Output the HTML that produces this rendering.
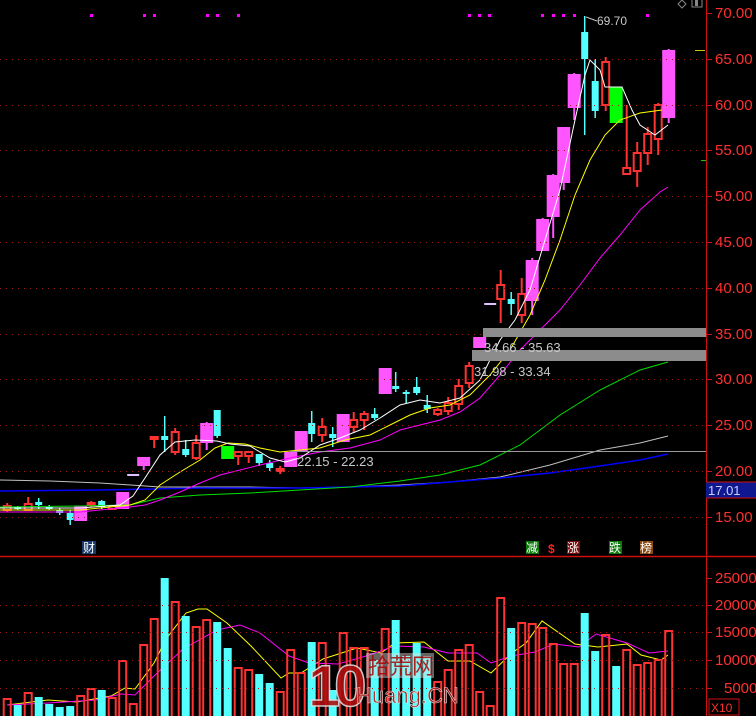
<!DOCTYPE html>
<html><head><meta charset="utf-8"><style>
html,body{margin:0;padding:0;background:#000;width:756px;height:716px;overflow:hidden}
svg{display:block}
text{font-family:"Liberation Sans","Noto Sans CJK SC",sans-serif}
</style></head><body>
<svg id="s" width="756" height="716" viewBox="0 0 756 716" xmlns="http://www.w3.org/2000/svg">
<rect width="756" height="716" fill="#000"/>
<g id="grid" stroke="#a01818" stroke-width="1" stroke-dasharray="1,5"></g>
<g id="ma"></g>
<g id="cd"></g>
<g id="vol"></g>
<g id="vma"></g>
<rect x="483" y="328" width="223" height="9" fill="#8c8c8c"/>
<rect x="472" y="350" width="234" height="11" fill="#8c8c8c"/>
<line x1="290" y1="451.5" x2="706" y2="451.5" stroke="#9a9a9a" stroke-width="1"/>
<text x="484" y="352" font-size="13" fill="#c8c8c8">34.66 - 35.63</text>
<text x="474" y="376" font-size="13" fill="#c8c8c8">31.98 - 33.34</text>
<text x="297" y="466" font-size="13" fill="#c8c8c8">22.15 - 22.23</text>
<text x="597" y="25" font-size="12" fill="#c8c8c8">69.70</text>
<line x1="586" y1="17" x2="597" y2="21" stroke="#c8c8c8"/>
<line x1="706.5" y1="0" x2="706.5" y2="716" stroke="#d01010" stroke-width="1"/>
<line x1="0" y1="556.5" x2="756" y2="556.5" stroke="#d01010" stroke-width="1.5"/>
<g id="ax" fill="#ff3030" font-size="15"></g>
<rect x="706" y="482" width="50" height="16" fill="#101890"/>
<line x1="706" y1="482" x2="756" y2="482" stroke="#d01010"/>
<line x1="706" y1="498" x2="756" y2="498" stroke="#d01010"/>
<text x="708" y="495" font-size="13" fill="#c8d0ff">17.01</text>
<line x1="695" y1="50.5" x2="705" y2="50.5" stroke="#c8c800"/>
<line x1="701" y1="160.5" x2="706" y2="160.5" stroke="#00d000"/>
<rect x="709" y="699" width="30" height="16" fill="none" stroke="#d01010"/>
<text x="711" y="712" font-size="12" fill="#ff3030">X10</text>
<path d="M678 4 L682 0 L686 4 L682 8 Z" fill="none" stroke="#888" stroke-width="1"/>
<rect x="692" y="-2" width="10" height="9" fill="none" stroke="#888"/>
<rect x="695" y="-1" width="3" height="7" fill="#888"/>
<rect x="82" y="541" width="14" height="13" fill="#1a3a6a"/>
<text x="83" y="552" font-size="12" fill="#fff">财</text>
<rect x="526" y="541" width="13" height="13" fill="#0b7a0b"/>
<text x="526" y="552" font-size="12" fill="#fff">减</text>
<text x="548" y="553" font-size="12" fill="#ff2020" font-weight="bold">$</text>
<rect x="567" y="541" width="13" height="13" fill="#7a0b0b"/>
<text x="567" y="552" font-size="12" fill="#fff">涨</text>
<rect x="609" y="541" width="13" height="13" fill="#0b7a0b"/>
<text x="609" y="552" font-size="12" fill="#fff">跌</text>
<rect x="640" y="541" width="13" height="13" fill="#8a4a10"/>
<text x="640" y="552" font-size="12" fill="#fff">榜</text>
<g opacity="0.9">
<text x="308" y="706" font-size="58" font-weight="bold" fill="#b01010" stroke="#ddd" stroke-width="1.5" letter-spacing="-6">10</text>
<rect x="366" y="653" width="68" height="25" fill="#ddd" opacity="0.5"/>
<text x="368" y="674" font-size="22" fill="#b01010">拾荒网</text>
<text x="356" y="703" font-size="22" fill="#b01010" stroke="#eee" stroke-width="0.6">Huang.CN</text>
</g>
</svg>
<script>
var NS="http://www.w3.org/2000/svg";
function el(p,t,a){var e=document.createElementNS(NS,t);for(var k in a)e.setAttribute(k,a[k]);document.getElementById(p).appendChild(e);return e;}
[59,105,150,196,242,288,334,379,425,471,517,605,632,660,688].forEach(function(y){el("grid","line",{x1:0,y1:y+.5,x2:706,y2:y+.5});});
var lab=[["70.00",13],["65.00",59],["60.00",105],["55.00",150],["50.00",196],["45.00",242],["40.00",288],["35.00",334],["30.00",379],["25.00",425],["20.00",471],["15.00",517],["25000",578],["20000",605],["15000",632],["10000",660],["5000",688]];
lab.forEach(function(l){var w=l[0].length==4?9:0;var t=el("ax","text",{x:715+w,y:l[1]+5});t.textContent=l[0];el("s","line",{x1:706,y1:l[1]+.5,x2:712,y2:l[1]+.5,stroke:"#d01010"});});
[91,144,154,207,217,238,469,479,489,542,553,563,574,647].forEach(function(x){el("s","rect",{x:x-1,y:14,width:3,height:3,fill:"#ff00ff"});});
function pl(c,pts,w){el("ma","polyline",{points:pts,fill:"none",stroke:c,"stroke-width":w||1});}
pl("#c0c0c0","0,480 50,481 100,483 160,487 250,487 300,488 350,487 400,485 450,482 500,477 550,465 600,450 640,443 668,436");
pl("#0000ff","0,491 100,490 200,488 300,488 400,486 500,478 550,473 600,466 640,460 668,454",1.5);
pl("#00e000","0,507 80,506 130,505 160,498 200,495 250,493 300,490 350,487 400,481 440,475 480,465 520,445 560,415 600,390 640,370 668,362");
pl("#ff00ff","0,512 80,512 130,507 145,505 160,500 180,492 200,483 220,475 240,470 260,465 290,458 320,452 350,448 380,440 400,430 420,425 440,420 460,412 480,398 500,375 520,350 540,330 560,310 580,285 600,258 620,235 640,210 660,192 668,187");
pl("#ffff00","0,510 80,510 130,505 145,500 160,485 180,472 200,460 215,448 228,443 245,444 260,448 280,452 300,450 320,448 345,440 370,435 390,425 410,415 430,408 450,405 470,395 490,375 510,350 530,315 545,280 560,240 575,195 590,160 605,135 620,120 640,113 662,110");
pl("#ffffff","0,508 80,508 120,505 133,496 145,478 160,455 175,442 195,440 217,441 230,444 250,446 270,458 285,462 300,458 320,445 340,438 360,430 380,418 400,405 420,400 440,403 460,398 480,380 500,340 515,320 530,290 545,240 560,190 575,120 585,75 590,60 600,70 605,87 622,87 632,110 640,125 655,135 668,125");
var C=[[0,"r",506,510,503,512],[1,"c",507,509,506,510],[2,"r",504,510,497,511],[3,"c",502,505,498,509],[4,"c",507,509,505,510],[5,"c",510,513,508,515],[6,"c",513,520,510,525],[7,"p",506,521],[8,"r",503,505,501,507],[9,"c",501,507,500,509],[10,"r",506,509,505,510],[11,"p",492,509],[12,"w",474,476],[13,"p",457,466,457,470],[14,"r",437,439,436,448],[15,"c",436,440,416,452],[16,"r",432,452,428,455],[17,"c",449,455,440,457],[18,"r",443,458,435,460],[19,"p",423,443,422,450],[20,"c",410,436,410,438],[21,"g",446,459],[22,"r",452,456,452,465],[23,"r",452,456,452,463],[24,"c",454,463,454,466],[25,"c",463,468,460,471],[26,"r",469,471,466,474],[27,"p",452,467],[28,"p",431,452],[29,"c",423,434,411,442],[30,"r",427,435,418,442],[31,"c",434,438,427,447],[32,"p",414,442],[33,"r",420,427,412,432],[34,"r",414,420,411,430],[35,"c",414,418,408,420],[36,"p",368,394],[37,"c",386,389,372,392],[38,"c",392,394,390,403],[39,"c",387,393,377,395],[40,"c",405,409,395,413],[41,"r",410,414,408,416],[42,"r",403,411,397,415],[43,"r",386,404,379,410],[44,"r",366,383,362,388],[45,"p",337,348],[46,"w",303,305],[47,"r",285,299,270,323],[48,"c",299,304,292,315],[49,"r",294,315,278,323],[50,"p",260,301,258,315],[51,"p",219,251,218,251],[52,"p",175,217,174,238],[53,"p",127,183,127,190],[54,"p",74,108,73,120],[55,"c",32,59,16,135],[56,"c",81,111,59,118],[57,"r",62,105,57,111],[58,"g",87,123],[59,"r",168,174,105,175],[60,"r",153,171,142,187],[61,"r",134,153,127,165],[62,"r",105,139,103,155],[63,"p",50,118,49,123]];
var col={r:"#ff3232",p:"#ff55ff",c:"#54ffff",g:"#00ff00",w:"#e0c0ff"};
C.forEach(function(c){var x=7.2+10.5*c[0];var f=col[c[1]];
 if(c.length>4)el("cd","line",{x1:x,y1:c[4],x2:x,y2:c[5],stroke:f,"stroke-width":c[1]=="c"?1.5:2});
 var w=(c[1]=="p"||c[1]=="g")?13:(c[1]=="w"?12:7);
 if(c[1]=="r")el("cd","rect",{x:x-3.5,y:c[2],width:7,height:Math.max(1,c[3]-c[2]),fill:"#000",stroke:f,"stroke-width":2});
 else el("cd","rect",{x:x-w/2,y:c[2],width:w,height:Math.max(2,c[3]-c[2]),fill:f});
});
var V="r699,c705,r693,c697,c704,c707,c706,r696,r689,c690,r698,r661,r704,r645,r619,c578,r602,c616,r627,r620,c622,c648,r668,r670,c674,c683,r692,r650,r673,c642,r643,c690,r633,r648,r648,c660,r629,c620,c656,c643,c656,r682,r670,r650,r645,r692,r706,r598,c628,r623,r624,r628,r644,r664,r664,c613,c651,r635,c666,r650,r665,r663,r660,r631".split(",");
V.forEach(function(v,i){var x=7.2+10.5*i;var t=+v.slice(1);
 if(v[0]=="r")el("vol","rect",{x:x-3.5,y:t,width:7,height:720-t,fill:"none",stroke:"#ff3232","stroke-width":2});
 else el("vol","rect",{x:x-4,y:t,width:8,height:720-t,fill:"#54ffff"});});
el("vma","polyline",{points:"7,705 48,700 77,702 111,696 125,688 135,689 154,663 166,639 186,613 198,609 207,609 227,623 251,646 281,678 289,673 301,673 323,659 357,648 381,653 395,643 424,642 448,661 470,661 491,673 512,653 526,643 542,621 575,644 598,647 627,644 641,655 661,660 668,655",fill:"none",stroke:"#ffff00"});
el("vma","polyline",{points:"7,705 48,703 96,700 121,694 135,695 154,676 183,649 217,630 240,625 260,633 289,656 309,663 338,664 366,656 395,646 424,647 448,653 477,653 491,663 511,656 535,652 554,644 579,647 596,634 627,643 649,653 668,651",fill:"none",stroke:"#ff00ff"});
var s=document.getElementById("s");["grid","ma","cd","vol","vma"].forEach(function(id){s.insertBefore(document.getElementById(id),s.children[1]);});
</script>
</body></html>
